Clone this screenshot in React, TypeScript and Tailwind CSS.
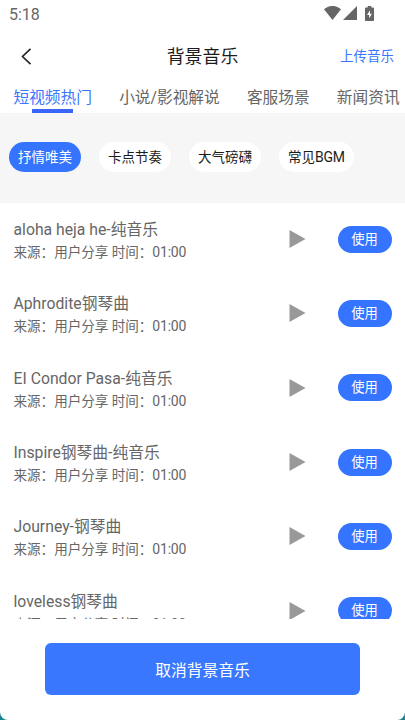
import React from "react";
import { clsx } from "clsx";

interface Track {
  id: number;
  name: string;
  duration: string;
}

const TABS = ["短视频热门", "小说/影视解说", "客服场景", "新闻资讯"];

const CATEGORIES = [
  { label: "抒情唯美" },
  { label: "卡点节奏" },
  { label: "大气磅礴" },
  { label: "常见", suffix: "BGM" },
];

const TRACKS: Track[] = [
  { id: 1, name: "aloha heja he-纯音乐", duration: "01:00" },
  { id: 2, name: "Aphrodite钢琴曲", duration: "01:00" },
  { id: 3, name: "EI Condor Pasa-纯音乐", duration: "01:00" },
  { id: 4, name: "Inspire钢琴曲-纯音乐", duration: "01:00" },
  { id: 5, name: "Journey-钢琴曲", duration: "01:00" },
  { id: 6, name: "loveless钢琴曲", duration: "01:00" },
];

function StatusBar() {
  return (
    <div className="flex h-7 shrink-0 items-center justify-between pl-[9px] pr-[31px] text-[#666]">
      <span className="pt-px text-[16px] leading-[27px]">5:18</span>
      <div className="mb-[2px] flex h-[15px] items-center">
        <svg className="h-[14px] w-[17px]" viewBox="0 0 17 14" fill="currentColor">
          <path d="M0 3.2C5 -1.1 12 -1.1 17 3.2L8.5 14Z" />
        </svg>
        <svg className="ml-[2px] h-[14px] w-[14px]" viewBox="0 0 14 14" fill="currentColor">
          <path d="M14 0V14H0Z" />
        </svg>
        <svg className="ml-2 h-[15px] w-[9px]" viewBox="0 0 9 15">
          <path
            d="M2.7 0H6.3V1.5H8C8.6 1.5 9 1.9 9 2.5V14C9 14.6 8.6 15 8 15H1C.4 15 0 14.6 0 14V2.5C0 1.9 .4 1.5 1 1.5H2.7Z"
            fill="currentColor"
          />
          <path d="M5 4.3L2 9H4.1V12.3L7 7.7H5Z" fill="#fff" />
        </svg>
      </div>
    </div>
  );
}

function Header() {
  return (
    <header className="grid h-14 shrink-0 grid-cols-[1fr_auto_1fr] items-center px-[11px]">
      <button type="button" aria-label="返回" className="ml-[10px] w-fit text-[#222]">
        <svg className="h-[17px] w-[11px]" viewBox="0 0 11 17" fill="none" stroke="currentColor" strokeWidth={1.6}>
          <path d="M9.5 .8L1.5 8.5L9.5 16.2" />
        </svg>
      </button>
      <h1 className="pt-px text-[17.9px] leading-6 text-[#1c1c1c]">背景音乐</h1>
      <button type="button" className="justify-self-end pt-px text-[13.5px] text-[#3a76fe]">
        上传音乐
      </button>
    </header>
  );
}

function Tabs() {
  return (
    <nav className="flex h-[28.5px] shrink-0 gap-[27.2px] overflow-hidden pl-[13.5px] text-[15.7px] text-[#666]">
      {TABS.map((tab, i) => (
        <div key={tab} className={clsx("flex shrink-0 flex-col items-center", i === 0 && "text-[#3a76fe]")}>
          <span className="h-[25px] leading-[27px]">{tab}</span>
          {i === 0 && <span className="h-[3.5px] w-[41px] bg-[#3a66f8]" />}
        </div>
      ))}
    </nav>
  );
}

function CategoryBar() {
  return (
    <div className="flex h-[90px] shrink-0 items-center gap-[18px] bg-[#f6f6f6] pb-px pl-[9px]">
      {CATEGORIES.map(({ label, suffix }, i) => (
        <button
          key={label}
          type="button"
          className={clsx(
            "h-[30px] rounded-full px-[9px] pt-px text-[13.5px]",
            i === 0 ? "bg-[#3574fe] text-white" : "bg-white text-[#1c1c1c]",
          )}
        >
          {label}
          {suffix && <span className="text-[14px] tracking-[-0.3px]">{suffix}</span>}
        </button>
      ))}
    </div>
  );
}

function TrackRow({ track }: { track: Track }) {
  return (
    <li className="flex h-[74.3px] items-center pl-[13.5px] pr-[13.5px]">
      <div className="min-w-0 flex-1 pt-[2px] text-[#666]">
        <p className="text-[15.75px] leading-[23px]">{track.name}</p>
        <p className="text-[13.55px] leading-[22px]">
          来源：用户分享 时间：<span className="text-[14px] tracking-[-0.2px]">{track.duration}</span>
        </p>
      </div>
      <svg className="mb-px mr-8 h-[18px] w-[17px] text-[#999]" viewBox="0 0 17 18" fill="currentColor">
        <path d="M.5 0L16.5 9L.5 18Z" />
      </svg>
      <button type="button" className="mb-px h-[27px] w-[54px] rounded-full bg-[#3574fe] pt-px text-[13.3px] text-white">
        使用
      </button>
    </li>
  );
}

export default function App() {
  return (
    <div className="h-[720px] w-[405px] overflow-hidden bg-[#16838c]">
      <div className="flex h-full flex-col rounded-b-[8px] bg-white font-[Roboto,'Noto_Sans_CJK_SC',sans-serif]">
        <StatusBar />
        <Header />
        <Tabs />
        <CategoryBar />
        <ul className="h-[416px] shrink-0 overflow-hidden">
          {TRACKS.map((track) => (
            <TrackRow key={track.id} track={track} />
          ))}
        </ul>
        <footer className="flex flex-1 justify-center pt-[24.8px]">
          <button type="button" className="h-[52px] w-[315px] rounded-[6px] bg-[#3877fe] pt-[3px] text-[15.75px] text-white">
            取消背景音乐
          </button>
        </footer>
      </div>
    </div>
  );
}
